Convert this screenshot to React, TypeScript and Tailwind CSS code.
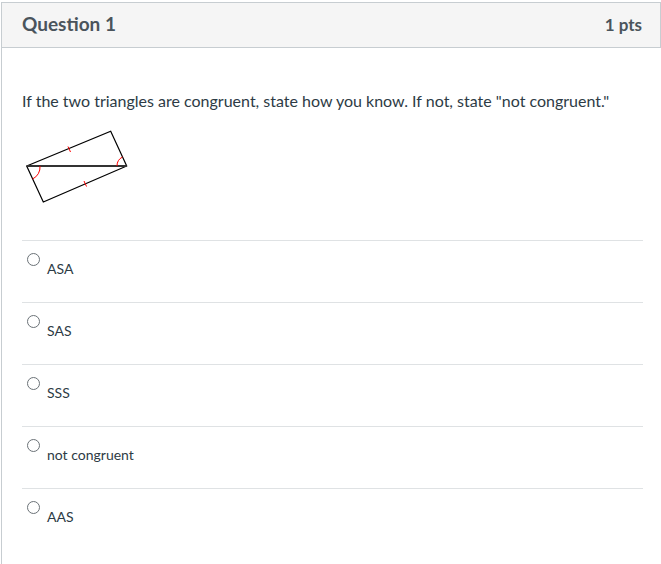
import React from 'react'

const options = ['ASA', 'SAS', 'SSS', 'not congruent', 'AAS']

function Figure() {
  // rotated rectangle split by its diagonal, with tick marks and angle arcs
  return (
    <svg width="104" height="76" viewBox="0 0 104 76" className="block">
      <g transform="translate(-26,-127)">
        <polygon points="26.7,164 110.7,129.3 126.7,164 43.3,200" fill="none" stroke="#000" strokeWidth="1.2" />
        <line x1="26.7" y1="164" x2="126.7" y2="164" stroke="#333" strokeWidth="2" />
        <line x1="68" y1="144.5" x2="70.5" y2="150" stroke="#f00" strokeWidth="1" />
        <line x1="84" y1="179" x2="86.5" y2="184.5" stroke="#f00" strokeWidth="1" />
        <path d="M 40 164 A 13 13 0 0 1 32.5 177" fill="none" stroke="#f00" strokeWidth="1" />
        <path d="M 117 164 A 10 10 0 0 1 122.5 155" fill="none" stroke="#f00" strokeWidth="1" />
      </g>
    </svg>
  )
}

export default function App() {
  return (
    <div className="bg-white w-[661px] h-[564px] overflow-hidden pt-[2px] pl-[1px]" style={{ fontFamily: 'Lato, "Open Sans", sans-serif' }}>
      <div className="w-[660px] h-[600px] border-l border-[#c7cdd1]">
        {/* header */}
        <div className="h-[46px] bg-[#f5f5f5] border-t border-b border-r border-[#c7cdd1] flex items-center justify-between pl-[20px] pr-[18px]">
          <h2 className="text-[19px] font-bold text-[#4a545c] -mt-[2px]">Question 1</h2>
          <span className="text-[17px] font-bold text-[#4a545c] -mt-[1px]">1 pts</span>
        </div>

        {/* body */}
        <div className="pl-[20px] pr-[18px] pt-[44px]">
          <p className="text-[16px] text-[#2d3b45] leading-[18px]">
            If the two triangles are congruent, state how you know. If not, state "not congruent."
          </p>
          <div className="mt-[19px] ml-[4px]">
            <Figure />
          </div>

          <div className="mt-[35px]">
            {options.map((opt) => (
              <div key={opt} className="h-[62px] border-t border-[#dfe2e4] flex">
                <span className="ml-[5px] mt-[12px] w-[13px] h-[13px] rounded-full border border-[#6b7277] bg-white shrink-0" />
                <span className="ml-[7px] mt-[20px] text-[14px] text-[#2d3b45] leading-[16px]">{opt}</span>
              </div>
            ))}
          </div>
        </div>
      </div>
    </div>
  )
}
